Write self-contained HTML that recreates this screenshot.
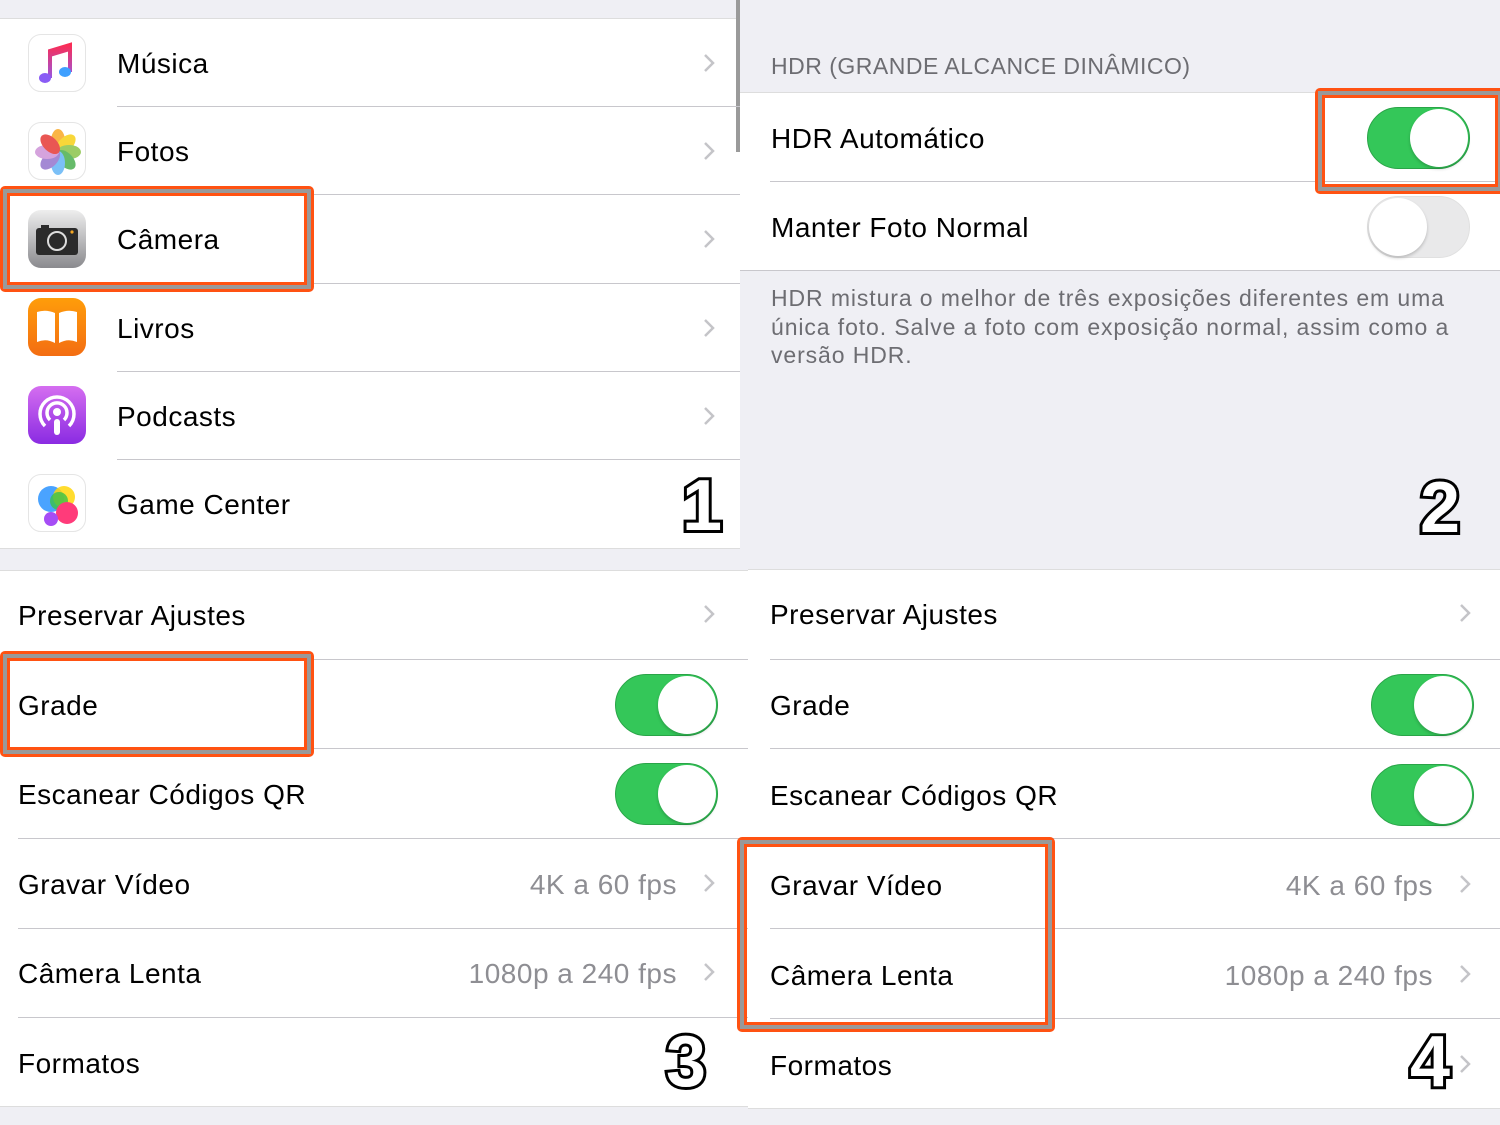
<!DOCTYPE html>
<html><head><meta charset="utf-8">
<style>
*{margin:0;padding:0;box-sizing:border-box}
body{width:1500px;height:1125px;background:#efeff4;position:relative;overflow:hidden;font-family:"Liberation Sans",sans-serif;color:#000}
.a{position:absolute}
.w{position:absolute;background:#fff}
.sep{position:absolute;height:1px;background:#c8c7cc}
.t{position:absolute;font-size:28px;line-height:32px;white-space:nowrap;letter-spacing:.5px}
.v{position:absolute;font-size:28px;line-height:32px;color:#8e8e93;white-space:nowrap;text-align:right;letter-spacing:.5px}
.chev{position:absolute;width:12px;height:20px}
.tog{position:absolute;width:103px;height:62px;border-radius:31px;background:#34c759;border:1px solid #2aa448}
.tog::after{content:"";position:absolute;right:1px;top:1px;width:58px;height:58px;border-radius:50%;background:#fff;box-shadow:0 2px 3px rgba(0,0,0,.2)}
.off{background:#e9e9ea;border:1px solid #e0e0e0}
.off::after{left:1px;right:auto}
.box{position:absolute;border:3px solid #ff5212;border-radius:5px;background:transparent}
.box::before{content:"";position:absolute;inset:0;border:4px solid #999}
.box::after{content:"";position:absolute;inset:4px;border:3px solid #ff5212}
.num{position:absolute;font-size:72px;line-height:76px;color:#fff;-webkit-text-stroke:6px #000;paint-order:stroke fill;font-family:"Liberation Sans",sans-serif;font-weight:700}
.ic{position:absolute;width:58px;height:58px;border-radius:13px;overflow:hidden}
.hd{position:absolute;font-size:23px;line-height:28px;color:#6d6d72;white-space:nowrap;letter-spacing:.5px}
</style></head><body>

<!-- Top-left panel -->
<div class="w" style="left:0;top:19px;width:740px;height:529px"></div>
<div class="sep" style="left:0;top:18px;width:740px;background:#ddd"></div>
<div class="sep" style="left:0;top:548px;width:740px;background:#ddd"></div>
<div class="a" style="left:736px;top:0;width:4px;height:152px;background:#9a9a9a"></div>
<div class="sep" style="left:117px;top:106px;width:623px"></div>
<div class="sep" style="left:117px;top:194px;width:623px"></div>
<div class="sep" style="left:117px;top:283px;width:623px"></div>
<div class="sep" style="left:117px;top:371px;width:623px"></div>
<div class="sep" style="left:117px;top:459px;width:623px"></div>

<!-- icons -->
<div class="ic" style="left:28px;top:34px;background:#fff;border:1px solid #e5e5e5">
<svg width="58" height="58" viewBox="0 0 58 58"><defs><linearGradient id="mg" gradientUnits="userSpaceOnUse" x1="0" y1="10" x2="0" y2="48"><stop offset="0" stop-color="#fa2d55"/><stop offset="1" stop-color="#8a5cf5"/></linearGradient></defs>
<path d="M21 43 L21 16 L41 10 L41 37" stroke="url(#mg)" stroke-width="4" fill="none"/><path d="M21 16 L41 10 L41 16 L21 22Z" fill="url(#mg)"/><ellipse cx="16" cy="43" rx="6" ry="5" fill="#8a5cf5"/><ellipse cx="36" cy="37" rx="6" ry="5" fill="#3fa0ff"/></svg></div>
<div class="ic" style="left:28px;top:122px;background:#fff;border:1px solid #e5e5e5">
<svg width="58" height="58" viewBox="0 0 58 58"><g transform="translate(29 29)" opacity=".85">
<ellipse rx="7" ry="12" cy="-11" fill="#f9a825"/><ellipse rx="7" ry="12" cy="-11" fill="#f7d117" transform="rotate(45)"/><ellipse rx="7" ry="12" cy="-11" fill="#8bc34a" transform="rotate(90)"/><ellipse rx="7" ry="12" cy="-11" fill="#4caf50" transform="rotate(135)"/><ellipse rx="7" ry="12" cy="-11" fill="#64b5f6" transform="rotate(180)"/><ellipse rx="7" ry="12" cy="-11" fill="#9575cd" transform="rotate(225)"/><ellipse rx="7" ry="12" cy="-11" fill="#ce93d8" transform="rotate(270)"/><ellipse rx="7" ry="12" cy="-11" fill="#e53935" transform="rotate(315)"/></g></svg></div>
<div class="ic" style="left:28px;top:210px;background:linear-gradient(#eee,#8a8a8e)">
<svg width="58" height="58" viewBox="0 0 58 58"><rect x="8" y="18" width="42" height="27" rx="3" fill="#2b2b2b"/><rect x="13" y="15" width="8" height="4" fill="#2b2b2b"/><circle cx="29" cy="31" r="9" fill="#2b2b2b" stroke="#ddd" stroke-width="2"/><circle cx="44" cy="22" r="1.6" fill="#f5a623"/></svg></div>
<div class="ic" style="left:28px;top:298px;background:linear-gradient(#ff9d0a,#f36d12)">
<svg width="58" height="58" viewBox="0 0 58 58"><path d="M9 14 Q18 11 27 15 L27 45 Q18 40 9 44Z M31 15 Q40 11 49 14 L49 44 Q40 40 31 45Z" fill="#fff"/></svg></div>
<div class="ic" style="left:28px;top:386px;background:linear-gradient(#d56ef0,#8a2be2)">
<svg width="58" height="58" viewBox="0 0 58 58" fill="none" stroke="#fff" stroke-width="3.5"><path d="M17 40 A17 17 0 1 1 41 40"/><path d="M22 34 A10 10 0 1 1 36 34"/><circle cx="29" cy="26" r="4" fill="#fff" stroke="none"/><rect x="26" y="33" width="6" height="16" rx="3" fill="#fff" stroke="none"/></svg></div>
<div class="ic" style="left:28px;top:474px;background:#fff;border:1px solid #e5e5e5">
<svg width="58" height="58" viewBox="0 0 58 58"><circle cx="22" cy="24" r="13" fill="#4aa3ff"/><circle cx="35" cy="22" r="11" fill="#ffd60a" opacity=".85"/><circle cx="30" cy="26" r="9" fill="#39c24a" opacity=".8"/><circle cx="38" cy="38" r="11" fill="#ff3b7a"/><circle cx="22" cy="44" r="7" fill="#a64df5"/></svg></div>

<div class="t" style="left:117px;top:48px">Música</div>
<div class="t" style="left:117px;top:136px">Fotos</div>
<div class="t" style="left:117px;top:224px">Câmera</div>
<div class="t" style="left:117px;top:313px">Livros</div>
<div class="t" style="left:117px;top:401px">Podcasts</div>
<div class="t" style="left:117px;top:489px">Game Center</div>

<svg class="chev" style="left:703px;top:53px"><polyline points="2,2 10,10 2,18" fill="none" stroke="#c4c4c8" stroke-width="2.5"/></svg>
<svg class="chev" style="left:703px;top:141px"><polyline points="2,2 10,10 2,18" fill="none" stroke="#c4c4c8" stroke-width="2.5"/></svg>
<svg class="chev" style="left:703px;top:229px"><polyline points="2,2 10,10 2,18" fill="none" stroke="#c4c4c8" stroke-width="2.5"/></svg>
<svg class="chev" style="left:703px;top:318px"><polyline points="2,2 10,10 2,18" fill="none" stroke="#c4c4c8" stroke-width="2.5"/></svg>
<svg class="chev" style="left:703px;top:406px"><polyline points="2,2 10,10 2,18" fill="none" stroke="#c4c4c8" stroke-width="2.5"/></svg>
<div class="num" style="left:682px;top:468px">1</div>
<div class="box" style="left:0;top:186px;width:314px;height:106px"></div>

<!-- Top-right panel -->
<div class="hd" style="left:771px;top:52px">HDR (GRANDE ALCANCE DINÂMICO)</div>
<div class="w" style="left:740px;top:93px;width:760px;height:177px"></div>
<div class="sep" style="left:740px;top:92px;width:760px;background:#ddd"></div>
<div class="sep" style="left:740px;top:270px;width:760px"></div>
<div class="sep" style="left:770px;top:181px;width:730px"></div>
<div class="t" style="left:771px;top:123px">HDR Automático</div>
<div class="t" style="left:771px;top:212px">Manter Foto Normal</div>
<div class="tog" style="left:1367px;top:107px"></div>
<div class="tog off" style="left:1367px;top:196px"></div>
<div class="hd" style="left:771px;top:284px;line-height:28.5px;white-space:normal;width:705px;letter-spacing:.9px">HDR mistura o melhor de três exposições diferentes em uma única foto. Salve a foto com exposição normal, assim como a versão HDR.</div>
<div class="num" style="left:1420px;top:470px">2</div>
<div class="box" style="left:1315px;top:88px;width:190px;height:106px"></div>

<!-- Bottom-left panel -->
<div class="w" style="left:0;top:571px;width:748px;height:535px"></div>
<div class="sep" style="left:0;top:570px;width:748px;background:#ddd"></div>
<div class="sep" style="left:0;top:1106px;width:748px;background:#ddd"></div>
<div class="sep" style="left:18px;top:659px;width:730px"></div>
<div class="sep" style="left:18px;top:748px;width:730px"></div>
<div class="sep" style="left:18px;top:838px;width:730px"></div>
<div class="sep" style="left:18px;top:928px;width:730px"></div>
<div class="sep" style="left:18px;top:1017px;width:730px"></div>
<div class="t" style="left:18px;top:600px">Preservar Ajustes</div>
<div class="t" style="left:18px;top:690px">Grade</div>
<div class="t" style="left:18px;top:779px">Escanear Códigos QR</div>
<div class="t" style="left:18px;top:869px">Gravar Vídeo</div>
<div class="t" style="left:18px;top:958px">Câmera Lenta</div>
<div class="t" style="left:18px;top:1048px">Formatos</div>
<div class="v" style="right:823px;top:869px">4K a 60 fps</div>
<div class="v" style="right:823px;top:958px">1080p a 240 fps</div>
<svg class="chev" style="left:703px;top:604px"><polyline points="2,2 10,10 2,18" fill="none" stroke="#c4c4c8" stroke-width="2.5"/></svg>
<svg class="chev" style="left:703px;top:873px"><polyline points="2,2 10,10 2,18" fill="none" stroke="#c4c4c8" stroke-width="2.5"/></svg>
<svg class="chev" style="left:703px;top:962px"><polyline points="2,2 10,10 2,18" fill="none" stroke="#c4c4c8" stroke-width="2.5"/></svg>
<div class="tog" style="left:615px;top:674px"></div>
<div class="tog" style="left:615px;top:763px"></div>
<div class="num" style="left:666px;top:1024px">3</div>
<div class="box" style="left:0;top:651px;width:314px;height:106px"></div>

<!-- Bottom-right panel -->
<div class="w" style="left:748px;top:570px;width:752px;height:538px"></div>
<div class="sep" style="left:748px;top:569px;width:752px;background:#ddd"></div>
<div class="sep" style="left:748px;top:1108px;width:752px;background:#ddd"></div>
<div class="sep" style="left:770px;top:659px;width:730px"></div>
<div class="sep" style="left:770px;top:748px;width:730px"></div>
<div class="sep" style="left:770px;top:838px;width:730px"></div>
<div class="sep" style="left:770px;top:928px;width:730px"></div>
<div class="sep" style="left:770px;top:1018px;width:730px"></div>
<div class="t" style="left:770px;top:599px">Preservar Ajustes</div>
<div class="t" style="left:770px;top:690px">Grade</div>
<div class="t" style="left:770px;top:780px">Escanear Códigos QR</div>
<div class="t" style="left:770px;top:870px">Gravar Vídeo</div>
<div class="t" style="left:770px;top:960px">Câmera Lenta</div>
<div class="t" style="left:770px;top:1050px">Formatos</div>
<div class="v" style="right:67px;top:870px">4K a 60 fps</div>
<div class="v" style="right:67px;top:960px">1080p a 240 fps</div>
<svg class="chev" style="left:1459px;top:603px"><polyline points="2,2 10,10 2,18" fill="none" stroke="#c4c4c8" stroke-width="2.5"/></svg>
<svg class="chev" style="left:1459px;top:874px"><polyline points="2,2 10,10 2,18" fill="none" stroke="#c4c4c8" stroke-width="2.5"/></svg>
<svg class="chev" style="left:1459px;top:964px"><polyline points="2,2 10,10 2,18" fill="none" stroke="#c4c4c8" stroke-width="2.5"/></svg>
<svg class="chev" style="left:1459px;top:1054px"><polyline points="2,2 10,10 2,18" fill="none" stroke="#c4c4c8" stroke-width="2.5"/></svg>
<div class="tog" style="left:1371px;top:674px"></div>
<div class="tog" style="left:1371px;top:764px"></div>
<div class="num" style="left:1410px;top:1024px">4</div>
<div class="box" style="left:737px;top:837px;width:318px;height:195px"></div>

</body></html>
